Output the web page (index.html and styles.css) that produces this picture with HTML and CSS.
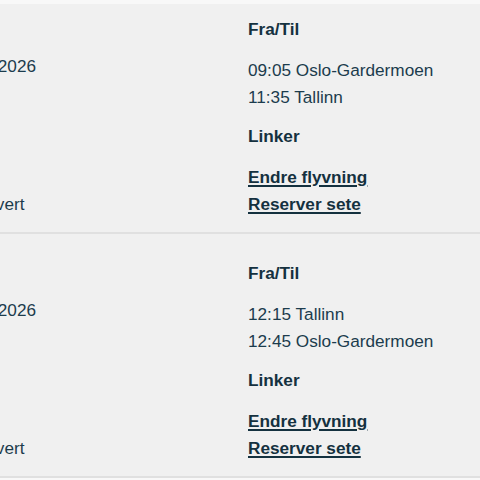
FILE: index.html
```html
<!DOCTYPE html>
<html lang="no">
<head>
<meta charset="utf-8">
<title>Mine reiser</title>
<link rel="stylesheet" href="styles.css">
</head>
<body>
<div class="trips">
  <section class="trip trip-first">
    <div class="col col-date">
      <h3 class="label label-date">Dato</h3>
      <p class="value">15.03.2026</p>
      <p class="value status">Reservert</p>
    </div>
    <div class="col">
      <h3 class="label">Fra/Til</h3>
      <p class="value">09:05 Oslo-Gardermoen</p>
      <p class="value">11:35 Tallinn</p>
      <h3 class="label section">Linker</h3>
      <a class="link" href="#">Endre flyvning</a>
      <a class="link" href="#">Reserver sete</a>
    </div>
  </section>
  <section class="trip">
    <div class="col col-date">
      <h3 class="label label-date">Dato</h3>
      <p class="value">22.03.2026</p>
      <p class="value status">Reservert</p>
    </div>
    <div class="col">
      <h3 class="label">Fra/Til</h3>
      <p class="value">12:15 Tallinn</p>
      <p class="value">12:45 Oslo-Gardermoen</p>
      <h3 class="label section">Linker</h3>
      <a class="link" href="#">Endre flyvning</a>
      <a class="link" href="#">Reserver sete</a>
    </div>
  </section>
</div>
</body>
</html>
```
FILE: styles.css
```css
html, body {
  margin: 0;
  padding: 0;
}
body {
  background: #f8f8f8;
  font-family: "Liberation Sans", Arial, sans-serif;
  font-size: 17.2px;
  line-height: 27px;
  color: #1c3c4d;
  overflow: hidden;
  padding-top: 4px;
}
.trips {
  display: flex;
  flex-direction: column;
}
.trip {
  display: grid;
  grid-template-columns: 298px 1fr;
  margin-left: -50px;
  background: #f0f0f0;
  padding: 26px 0 14px;
  border-bottom: 2px solid #e0e0e0;
}
.trip-first {
  padding-top: 12px;
}
.col {
  display: flex;
  flex-direction: column;
  align-items: flex-start;
}
.label {
  margin: 0 0 14px;
  font-size: 17.2px;
  font-weight: bold;
  line-height: 27px;
  color: #14313f;
}
.label-date {
  margin-bottom: 10px;
}
.section {
  margin-top: 12px;
}
.value {
  margin: 0;
}
.status {
  margin-top: auto;
}
.link {
  font-weight: bold;
  color: #14313f;
  text-decoration: underline;
  text-decoration-thickness: 2px;
  text-underline-offset: 2px;
}
```
